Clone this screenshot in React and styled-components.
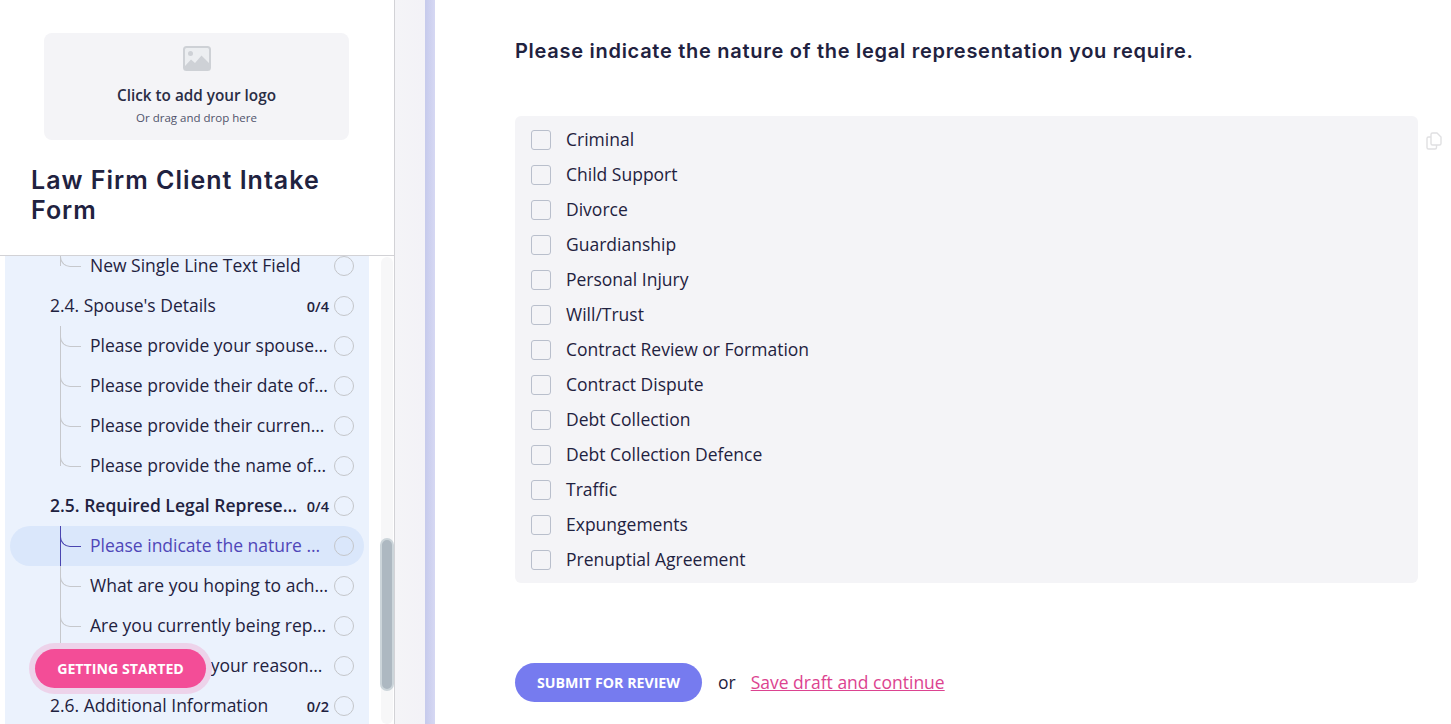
import React from 'react'
import styled, { createGlobalStyle } from 'styled-components'

const GlobalStyle = createGlobalStyle`
  html, body {
    margin: 0;
    height: 100%;
    overflow: hidden;
    background: #fff;
    font-family: 'Open Sans', 'Liberation Sans', sans-serif;
    color: #1f2240;
  }
  #root { height: 100%; }
  * { box-sizing: border-box; }
`

const outline = [
  { label: 'New Single Line Text Field', leaf: true, last: true },
  { label: "2.4. Spouse's Details", count: '0/4' },
  { label: 'Please provide your spouse…', leaf: true },
  { label: 'Please provide their date of…', leaf: true },
  { label: 'Please provide their curren…', leaf: true },
  { label: 'Please provide the name of…', leaf: true, last: true },
  { label: '2.5. Required Legal Represe…', count: '0/4', bold: true },
  { label: 'Please indicate the nature …', leaf: true, active: true },
  { label: 'What are you hoping to ach…', leaf: true },
  { label: 'Are you currently being rep…', leaf: true },
  { label: 'Please explain your reason…', leaf: true, last: true },
  { label: '2.6. Additional Information', count: '0/2' },
]

const options = [
  'Criminal',
  'Child Support',
  'Divorce',
  'Guardianship',
  'Personal Injury',
  'Will/Trust',
  'Contract Review or Formation',
  'Contract Dispute',
  'Debt Collection',
  'Debt Collection Defence',
  'Traffic',
  'Expungements',
  'Prenuptial Agreement',
]

const ImageIcon = () => (
  <svg width='28' height='25' viewBox='0 0 28 25'>
    <rect x='1' y='1' width='26' height='23' rx='2.5' fill='#eceef1' stroke='#ced1d6' strokeWidth='2' />
    <circle cx='7.5' cy='7.5' r='2.5' fill='#ced1d6' />
    <path d='M2 23 L2 20 L8 13.5 L12 17 L18.5 9.5 L26 17 L26 23 Z' fill='#ced1d6' />
  </svg>
)

const CopyIcon = () => (
  <svg width='16' height='18' viewBox='0 0 16 18' fill='none' stroke='#e0e0e2' strokeWidth='1.4'>
    <path d='M5 2.5 A1.5 1.5 0 0 1 6.5 1 H11 L15 5 V11.5 A1.5 1.5 0 0 1 13.5 13 H6.5 A1.5 1.5 0 0 1 5 11.5 Z' />
    <path d='M5 5 H2.5 A1.5 1.5 0 0 0 1 6.5 V15.5 A1.5 1.5 0 0 0 2.5 17 H9 A1.5 1.5 0 0 0 10.5 15.5 V13' />
  </svg>
)

const App = () => {
  return (
    <Page>
      <GlobalStyle />
      <Sidebar>
        <SidebarHeader>
          <LogoDrop>
            <ImageIcon />
            <LogoTitle>Click to add your logo</LogoTitle>
            <LogoHint>Or drag and drop here</LogoHint>
          </LogoDrop>
          <FormTitle>Law Firm Client Intake Form</FormTitle>
        </SidebarHeader>
        <SidebarBody>
          <OutlinePanel>
            <OutlineList>
              {outline.map(item => (
                <OutlineRow key={item.label} $leaf={item.leaf} $active={item.active} $last={item.last}>
                  <RowLabel $bold={item.bold} $active={item.active}>
                    {item.label}
                  </RowLabel>
                  {item.count && <RowCount>{item.count}</RowCount>}
                  <RowStatus />
                </OutlineRow>
              ))}
            </OutlineList>
          </OutlinePanel>
          <ScrollTrack>
            <ScrollThumb />
          </ScrollTrack>
          <GettingStarted>GETTING STARTED</GettingStarted>
        </SidebarBody>
      </Sidebar>
      <Gutter />
      <Main>
        <Question>Please indicate the nature of the legal representation you require.</Question>
        <OptionsWrap>
          <OptionsCard>
            {options.map(option => (
              <OptionRow key={option}>
                <OptionBox />
                <OptionText>{option}</OptionText>
              </OptionRow>
            ))}
          </OptionsCard>
          <CopyButton>
            <CopyIcon />
          </CopyButton>
        </OptionsWrap>
        <Actions>
          <SubmitButton>SUBMIT FOR REVIEW</SubmitButton>
          <OrText>or</OrText>
          <SaveLink href='#'>Save draft and continue</SaveLink>
        </Actions>
      </Main>
    </Page>
  )
}

const Page = styled.div`
  display: flex;
  height: 724px;
  overflow: hidden;
`

const Sidebar = styled.aside`
  width: 395px;
  flex-shrink: 0;
  display: flex;
  flex-direction: column;
  border-right: 1px solid #d2d2d6;
`

const SidebarHeader = styled.header`
  height: 256px;
  flex-shrink: 0;
  padding: 33px 0 0 31px;
  border-bottom: 1px solid #d2d2d6;
`

const LogoDrop = styled.div`
  width: 305px;
  height: 107px;
  margin-left: 13px;
  padding-top: 13px;
  display: flex;
  flex-direction: column;
  align-items: center;
  background: #f4f4f7;
  border-radius: 8px;
`

const LogoTitle = styled.div`
  margin-top: 13px;
  font-size: 15.3px;
  line-height: 22px;
  font-weight: 600;
  color: #2a2d45;
`

const LogoHint = styled.div`
  margin-top: 4px;
  font-size: 11.5px;
  line-height: 16px;
  color: #50536b;
`

const FormTitle = styled.h1`
  width: 320px;
  margin: 25px 0 0;
  font-family: 'Inter', 'Liberation Sans', sans-serif;
  font-size: 25px;
  line-height: 30px;
  font-weight: 600;
  letter-spacing: 1px;
  color: #1f2240;
`

const SidebarBody = styled.div`
  position: relative;
  flex: 1;
  min-height: 0;
  display: flex;
  padding-left: 5px;
`

const OutlinePanel = styled.div`
  width: 364px;
  flex-shrink: 0;
  overflow: hidden;
  background: #ebf2fd;
`

const OutlineList = styled.div`
  margin-top: -10px;
  padding: 0 5px;
`

const OutlineRow = styled.div`
  position: relative;
  height: 40px;
  display: flex;
  align-items: center;
  gap: 5px;
  padding-left: ${props => (props.$leaf ? '80px' : '40px')};
  padding-right: 10px;
  border-radius: 20px;
  background: ${props => (props.$active ? '#dae7fb' : 'transparent')};

  ${props =>
    props.$leaf &&
    `
    &::before {
      content: '';
      position: absolute;
      left: 50px;
      top: 0;
      height: ${props.$last ? '20px' : '40px'};
      border-left: 1px solid ${props.$active ? '#4a45b0' : '#c6c8cc'};
    }
    &::after {
      content: '';
      position: absolute;
      left: 50px;
      top: 10px;
      width: 20px;
      height: 10px;
      border-left: 1px solid ${props.$active ? '#4a45b0' : '#c6c8cc'};
      border-bottom: 1px solid ${props.$active ? '#4a45b0' : '#c6c8cc'};
      border-bottom-left-radius: 10px;
    }
  `}
`

const RowLabel = styled.div`
  flex: 1;
  min-width: 0;
  margin-top: -2px;
  white-space: nowrap;
  font-size: 17.5px;
  line-height: 24px;
  font-weight: ${props => (props.$bold ? 600 : 400)};
  color: ${props => (props.$active ? '#4f46b8' : '#1f2240')};
`

const RowCount = styled.div`
  flex-shrink: 0;
  font-size: 14.5px;
  font-weight: 600;
  color: #1f2240;
`

const RowStatus = styled.div`
  width: 20px;
  height: 20px;
  flex-shrink: 0;
  border: 1px solid #c4c6ca;
  border-radius: 50%;
`

const ScrollTrack = styled.div`
  width: 12px;
  margin: 1px 0 0 12px;
  padding-top: 281px;
  background: #f7f7f8;
  border-radius: 6px;
`

const ScrollThumb = styled.div`
  width: 14px;
  height: 153px;
  margin-left: -1px;
  background: #adb8c1;
  border: 2px solid #ccd5da;
  border-radius: 7px;
`

const GettingStarted = styled.button`
  position: absolute;
  left: 35px;
  top: 393px;
  width: 171px;
  height: 39px;
  border: 0;
  border-radius: 20px;
  background: #f34d97;
  box-shadow: 0 0 0 6px #edd3ea;
  color: #fff;
  font-family: inherit;
  font-size: 14.2px;
  font-weight: 700;
`

const Gutter = styled.div`
  width: 40px;
  flex-shrink: 0;
  background: linear-gradient(to right, #f4f4f7 0, #f3f2f7 30px, #c6caec 30px, #d6d8f3 40px);
`

const Main = styled.main`
  flex: 1;
  min-width: 0;
  padding: 38px 0 0 80px;
`

const Question = styled.h2`
  margin: 0;
  font-family: 'Inter', 'Liberation Sans', sans-serif;
  font-size: 20px;
  line-height: 26px;
  font-weight: 600;
  letter-spacing: 0.72px;
  color: #1f2240;
`

const OptionsWrap = styled.div`
  position: relative;
  width: 903px;
  margin-top: 52px;
`

const OptionsCard = styled.div`
  height: 467px;
  padding: 6.5px 16px;
  background: #f4f4f7;
  border-radius: 6px;
`

const OptionRow = styled.label`
  height: 35px;
  display: flex;
  align-items: center;
  gap: 15px;
  font-size: 17.5px;
  color: #1f2240;
`

const OptionText = styled.span`
  margin-top: -2px;
`

const OptionBox = styled.span`
  width: 20px;
  height: 20px;
  flex-shrink: 0;
  border: 1px solid #b9bfcc;
  border-radius: 3px;
`

const CopyButton = styled.div`
  position: absolute;
  left: 911px;
  top: 16px;
  line-height: 0;
`

const Actions = styled.div`
  display: flex;
  align-items: center;
  margin-top: 80px;
`

const SubmitButton = styled.button`
  width: 187px;
  height: 39px;
  border: 0;
  border-radius: 20px;
  background: #767bef;
  color: #fff;
  font-family: inherit;
  font-size: 14.2px;
  font-weight: 700;
`

const OrText = styled.span`
  margin: -2px 15px 0 16px;
  font-size: 17.5px;
  color: #1f2240;
`

const SaveLink = styled.a`
  margin-top: -2px;
  font-size: 17.5px;
  color: #dc4390;
  text-decoration: underline;
`

export default App
